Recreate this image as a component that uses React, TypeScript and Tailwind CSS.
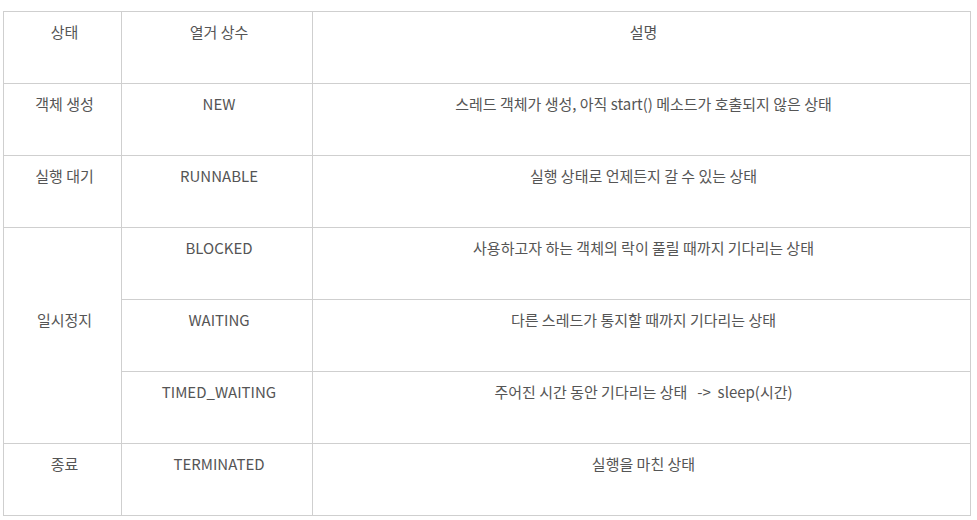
import React from 'react'

interface Row {
  state?: string
  span?: number
  name: string
  desc: string
}

const rows: Row[] = [
  { state: '상태', name: '열거 상수', desc: '설명' },
  { state: '객체 생성', name: 'NEW', desc: '스레드 객체가 생성, 아직 start() 메소드가 호출되지 않은 상태' },
  { state: '실행 대기', name: 'RUNNABLE', desc: '실행 상태로 언제든지 갈 수 있는 상태' },
  { state: '일시정지', span: 3, name: 'BLOCKED', desc: '사용하고자 하는 객체의 락이 풀릴 때까지 기다리는 상태' },
  { name: 'WAITING', desc: '다른 스레드가 통지할 때까지 기다리는 상태' },
  { name: 'TIMED_WAITING', desc: '주어진 시간 동안 기다리는 상태\u00a0\u00a0\u00a0->\u00a0\u00a0sleep(시간)' },
  { state: '종료', name: 'TERMINATED', desc: '실행을 마친 상태' },
]

const cell = 'flex items-center justify-center pl-[4px] pb-[31px] border-r border-b border-[#cfcfcf] text-center'

const App = () => {
  return (
    <div
      className="w-[977px] h-[520px] bg-white pl-[3px] pt-[11px] text-[15px] leading-[22px] text-[#555]"
      style={{ fontFamily: '"Noto Sans CJK KR", "Noto Sans", sans-serif' }}
    >
      <div className="grid grid-cols-[118px_191px_658px] auto-rows-[72px] w-[968px] border-t border-l border-[#cfcfcf]">
        {rows.map((r, i) => (
          <React.Fragment key={i}>
            {r.state && (
              <div className={cell + (r.span === 3 ? ' row-span-3' : '')}>{r.state}</div>
            )}
            <div className={cell}>{r.name}</div>
            <div className={cell}>{r.desc}</div>
          </React.Fragment>
        ))}
      </div>
    </div>
  )
}

export default App
